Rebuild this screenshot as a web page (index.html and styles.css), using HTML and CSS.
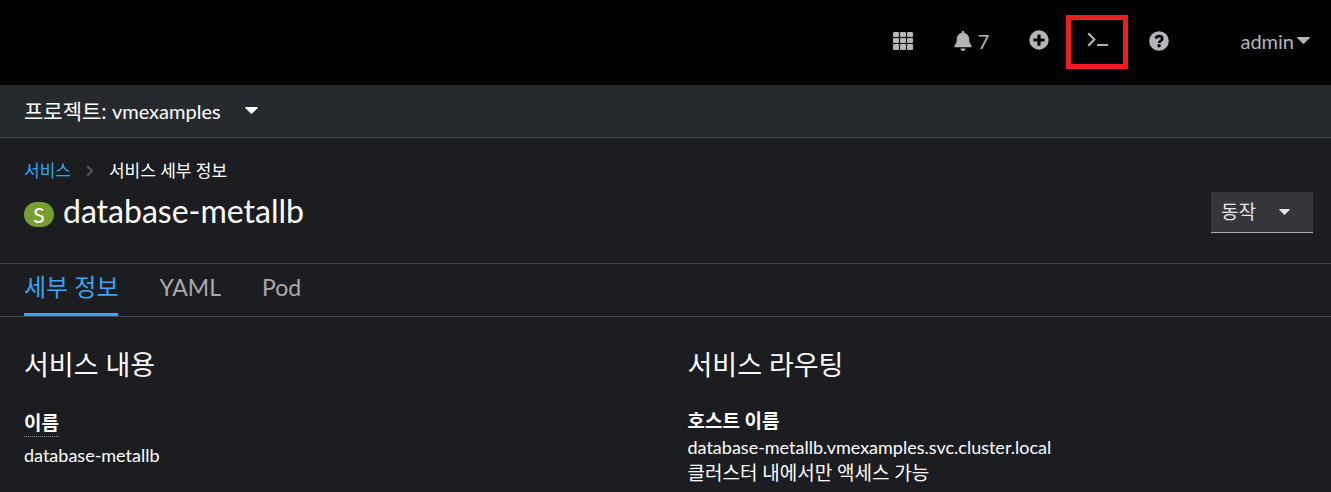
FILE: index.html
```html
<!DOCTYPE html>
<html lang="ko">
<head>
<meta charset="utf-8">
<meta name="viewport" content="width=device-width, initial-scale=1">
<title>database-metallb</title>
<link rel="stylesheet" href="styles.css">
</head>
<body>
<header class="masthead">
  <button class="tool tool-apps" aria-label="Applications">
    <svg width="20" height="18" viewBox="0 0 20 18" fill="currentColor"><rect width="6" height="5" rx="1"/><rect x="7" width="6" height="5" rx="1"/><rect x="14" width="6" height="5" rx="1"/><rect y="6" width="6" height="5" rx="1"/><rect x="7" y="6" width="6" height="5" rx="1"/><rect x="14" y="6" width="6" height="5" rx="1"/><rect y="12" width="6" height="6" rx="1"/><rect x="7" y="12" width="6" height="6" rx="1"/><rect x="14" y="12" width="6" height="6" rx="1"/></svg>
  </button>
  <button class="tool tool-bell">
    <svg width="18" height="20" viewBox="0 0 448 512" fill="currentColor"><path d="M224 512c35.300 0 63.900-28.700 63.900-64H160.100c0 35.300 28.600 64 63.900 64zm215.400-149.700c-19.300-20.800-55.500-52-55.500-154.300 0-77.700-54.500-139.900-127.900-155.200V32c0-17.700-14.300-32-32-32s-32 14.300-32 32v20.800C118.600 68.100 64.100 130.300 64.100 208c0 102.300-36.200 133.500-55.500 154.300C2.600 368.700 0 376.400 0 384c.1 16.400 13 32 32.100 32h383.800c19.100 0 32-15.600 32.100-32 0-7.600-2.700-15.300-8.600-21.700z"/></svg>
    <span>7</span>
  </button>
  <button class="tool tool-add" aria-label="Add">
    <svg width="20" height="20" viewBox="0 0 512 512" fill="currentColor"><path d="M256 8a248 248 0 1 0 0 496 248 248 0 0 0 0-496zm144 276c0 6.600-5.400 12-12 12h-92v92c0 6.600-5.400 12-12 12h-56c-6.600 0-12-5.400-12-12v-92h-92c-6.600 0-12-5.400-12-12v-56c0-6.600 5.400-12 12-12h92v-92c0-6.600 5.400-12 12-12h56c6.600 0 12 5.400 12 12v92h92c6.600 0 12 5.400 12 12z"/></svg>
  </button>
  <button class="tool tool-terminal" aria-label="Terminal">
    <svg width="22" height="16" viewBox="0 0 22 16" fill="none" stroke="currentColor" stroke-width="2.200"><path d="M1.300 1.300 7.300 7.500 1.300 13.700M10 13h11"/></svg>
  </button>
  <button class="tool tool-help" aria-label="Help">
    <svg width="20" height="20" viewBox="0 0 20 20"><circle cx="10" cy="10" r="9.800" fill="currentColor"/><path d="M6.700 7.600C7.400 5.900 8.500 5.200 10.100 5.200c1.700 0 3.100 1 3.100 2.600 0 2.200-3 2-3 4.100" fill="none" stroke="#030303" stroke-width="2.700"/><circle cx="10.100" cy="14.700" r="1.700" fill="#030303"/></svg>
  </button>
  <button class="tool tool-user">admin<svg width="13" height="7" viewBox="0 0 13 7" fill="currentColor"><path d="M.8 0h11.400q1 .3.300 1.200L7.200 6.500q-.7.600-1.400 0L.5 1.200Q-.2.300.8 0z"/></svg></button>
</header>
<div class="project-bar">
  <button class="project-toggle"><span>프로젝트: <span class="project-name">vmexamples</span></span><svg width="13" height="7" viewBox="0 0 13 7" fill="currentColor"><path d="M.8 0h11.400q1 .3.300 1.200L7.200 6.500q-.7.600-1.400 0L.5 1.200Q-.2.300.8 0z"/></svg></button>
</div>
<main>
  <nav class="breadcrumb" aria-label="Breadcrumb">
    <a href="#">서비스</a>
    <svg width="8" height="12" viewBox="0 0 8 12" fill="none" stroke="currentColor" stroke-width="2.400"><path d="M1.200 1 6 6l-4.800 5"/></svg>
    <span>서비스 세부 정보</span>
  </nav>
  <div class="heading">
    <h1><span class="badge">S</span>database-metallb</h1>
    <button class="actions">동작<svg width="11" height="6" viewBox="0 0 13 7" fill="currentColor"><path d="M.8 0h11.400q1 .3.300 1.200L7.200 6.500q-.7.600-1.400 0L.5 1.200Q-.2.300.8 0z"/></svg></button>
  </div>
  <nav class="tabs" aria-label="Details">
    <a class="tab tab-current" href="#">세부 정보</a>
    <a class="tab" href="#">YAML</a>
    <a class="tab" href="#">Pod</a>
  </nav>
  <div class="details">
    <section>
      <h2>서비스 내용</h2>
      <dl>
        <dt><span class="hint">이름</span></dt>
        <dd>database-metallb</dd>
      </dl>
    </section>
    <section>
      <h2>서비스 라우팅</h2>
      <dl>
        <dt>호스트 이름</dt>
        <dd>database-metallb.vmexamples.svc.cluster.local</dd>
        <dd class="note">클러스터 내에서만 액세스 가능</dd>
      </dl>
    </section>
  </div>
</main>
</body>
</html>
```
FILE: styles.css
```css
* { box-sizing: border-box; }
body {
  margin: 0;
  background: #1b1d21;
  color: #fff;
  font: 18px/26px Lato, "Noto Sans CJK KR", sans-serif;
}
button { padding: 0; border: 0; background: none; color: inherit; font: inherit; cursor: pointer; }
svg { display: block; flex: none; }
h1, h2, dl, dd { margin: 0; font-weight: 400; }
a { color: #39a5f5; text-decoration: none; }

.masthead {
  display: flex;
  justify-content: flex-end;
  align-items: center;
  height: 85px;
  padding: 0 21px 4px 0;
  background: #030303;
  color: #b4b5b8;
}
.tool { display: flex; align-items: center; font-size: 20px; }
.tool-apps { margin-right: 41px; }
.tool-bell { gap: 6px; margin-right: 40px; }
.tool-add { margin: 0 17px 2px 0; }
.tool-terminal { justify-content: center; width: 62px; height: 54px; margin: 2px 21px 0 0; padding: 0 0 3px 2px; border: 5px solid #ee1c25; }
.tool-help { margin-right: 71px; }
.tool-user { gap: 3px; }

.project-bar {
  height: 53px;
  padding: 0 24px;
  border-bottom: 1px solid #444548;
  background: #26292d;
}
.project-toggle { display: flex; align-items: center; gap: 24px; height: 51px; font-size: 21px; }
.project-name { font-size: 20px; }

.breadcrumb {
  display: flex;
  align-items: center;
  gap: 15px;
  padding: 20px 24px 0;
  font-size: 17px;
}
.breadcrumb svg { color: #4f5255; }
.heading {
  display: flex;
  justify-content: space-between;
  padding: 8px 18px 30px 24px;
}
h1 { display: flex; gap: 9px; font-size: 32px; line-height: 38px; }
.badge {
  align-self: center;
  width: 30px;
  margin-top: 4px;
  border-radius: 13px;
  background: #769f30;
  font-size: 21px;
  line-height: 25px;
  text-align: center;
}
.actions {
  display: flex;
  align-items: center;
  justify-content: space-between;
  width: 102px;
  height: 41px;
  padding: 0 23px 0 10px;
  border-bottom: 1px solid #aaabac;
  background: #36373a;
  color: #e4e4e5;
  font-size: 19px;
}
.tabs {
  display: flex;
  gap: 41px;
  padding: 0 24px;
  border-top: 1px solid #444548;
  border-bottom: 1px solid #444548;
}
.tab { height: 52px; color: #a9aaac; font-size: 23px; line-height: 46px; }
.tab-current { border-bottom: 3px solid #39a5f5; color: #39a5f5; font-size: 24px; }

.details { display: grid; grid-template-columns: 1fr 1fr; gap: 44px; padding: 30px 24px 6px; }
h2 { margin-bottom: 25px; font-size: 27px; line-height: 36px; }
dt { font-size: 19px; font-weight: 700; }
.hint { display: inline-block; margin-bottom: 5px; padding-top: 2px; border-bottom: 1px dotted #8a8d90; }
.note { font-size: 19px; }
```
